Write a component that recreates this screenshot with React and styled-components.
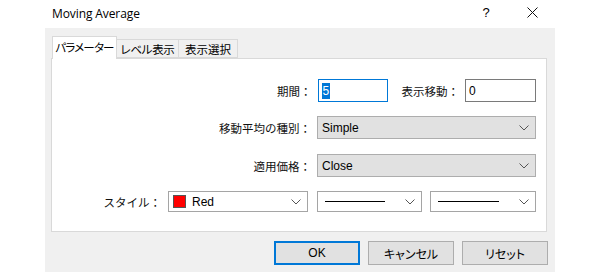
import React from "react";
import styled, { createGlobalStyle } from "styled-components";

const Global = createGlobalStyle`
  html, body { margin: 0; padding: 0; background: #fff; }
  body {
    font-family: "Liberation Sans", "Noto Sans CJK JP", sans-serif;
    font-size: 12px;
    color: #000;
  }
`;

const Page = styled.div`
  width: 600px;
  height: 272px;
  background: #fff;
  overflow: hidden;
`;

const Dialog = styled.div`
  width: 510px;
  margin-left: 45px;
  display: flex;
  flex-direction: column;
`;

const TitleBar = styled.div`
  height: 28px;
  display: flex;
  align-items: center;
  padding-left: 7px;
  background: #fff;
`;

const Title = styled.div`
  flex: 1;
  font-family: "Open Sans", "Liberation Sans", sans-serif;
  font-size: 12px;
  margin-top: -2px;
  letter-spacing: -0.1px;
`;

const TitleButton = styled.div`
  width: ${(p) => p.$w}px;
  display: flex;
  justify-content: center;
  align-items: center;
  font-size: 13px;
  margin-top: -3px;
`;

const Body = styled.div`
  height: 244px;
  background: #f0f0f0;
  padding: 8px 8px 0 6px;
  box-sizing: border-box;
  display: flex;
  flex-direction: column;
`;

const TabStrip = styled.div`
  height: 22px;
  display: flex;
  align-items: flex-end;
  padding-left: 1px;
  position: relative;
  z-index: 1;
`;

const Tab = styled.div`
  box-sizing: border-box;
  width: ${(p) => p.$w}px;
  height: ${(p) => (p.$active ? 23 : 19)}px;
  margin-bottom: ${(p) => (p.$active ? -1 : 0)}px;
  margin-left: ${(p) => (p.$first ? 0 : -1)}px;
  background: ${(p) => (p.$active ? "#fff" : "#f0f0f0")};
  border: 1px solid #d9d9d9;
  border-bottom: ${(p) => (p.$active ? "none" : "1px solid #d9d9d9")};
  display: flex;
  align-items: center;
  justify-content: center;
  font-family: "Noto Sans CJK JP", sans-serif;
  font-feature-settings: "palt";
  font-size: 11.5px;
  letter-spacing: ${(p) => p.$ls || 0}px;
  padding-bottom: ${(p) => (p.$active ? 2 : 0)}px;
  white-space: nowrap;
`;

const Panel = styled.div`
  box-sizing: border-box;
  width: 496px;
  height: 174px;
  background: #fff;
  border: 1px solid #d9d9d9;
  padding: 20px 10px 0 0;
  display: flex;
  flex-direction: column;
`;

const Row = styled.div`
  display: flex;
  justify-content: flex-end;
  align-items: center;
  height: ${(p) => p.$h}px;
  margin-top: ${(p) => p.$mt || 0}px;
`;

const Label = styled.div`
  font-family: "Noto Sans CJK JP", sans-serif;
  font-size: 11.5px;
  color: #111;
  white-space: nowrap;
  margin-left: ${(p) => p.$ml || 0}px;
  margin-right: ${(p) => p.$mr || 6}px;
`;

const TextBox = styled.div`
  box-sizing: border-box;
  width: ${(p) => p.$w}px;
  height: 23px;
  border: 1px solid ${(p) => (p.$focus ? "#0078d7" : "#7a7a7a")};
  background: #fff;
  display: flex;
  align-items: center;
  padding-left: 3px;
  font-size: 12px;
`;

const Selected = styled.span`
  background: #0078d7;
  color: #fff;
  padding: 1px 1px;
  line-height: 14px;
`;

const Select = styled.div`
  box-sizing: border-box;
  width: ${(p) => p.$w}px;
  height: ${(p) => p.$h || 23}px;
  margin-left: ${(p) => p.$ml || 0}px;
  border: 1px solid ${(p) => (p.$white ? "#a5a5a5" : "#adadad")};
  background: ${(p) => (p.$white ? "#fff" : "#e1e1e1")};
  display: flex;
  align-items: center;
  padding: 0 6px 0 4px;
  font-size: 12px;
  gap: 6px;
`;

const SelectText = styled.div`
  flex: 1;
  display: flex;
  align-items: center;
`;

const Swatch = styled.div`
  width: 13px;
  height: 13px;
  background: #ff0000;
  border: 1px solid #555;
  box-sizing: border-box;
  margin-right: 6px;
`;

const LineSample = styled.div`
  flex: 1;
  height: 1px;
  background: #000;
  margin: 0 14px 0 3px;
`;

const ButtonRow = styled.div`
  display: flex;
  justify-content: flex-end;
  margin-top: 9px;
  margin-right: -1px;
  gap: 8px;
`;

const Button = styled.div`
  box-sizing: border-box;
  width: 86px;
  height: 24px;
  background: #e1e1e1;
  border: ${(p) => (p.$default ? "2px solid #0078d7" : "1px solid #adadad")};
  display: flex;
  align-items: center;
  justify-content: center;
  font-family: "Liberation Sans", "Noto Sans CJK JP", sans-serif;
  font-feature-settings: "palt";
  font-size: 12px;
`;

const Chevron = () => (
  <svg width="10" height="6" viewBox="0 0 10 6">
    <polyline points="0.5,0.5 5,5 9.5,0.5" fill="none" stroke="#555" strokeWidth="1" />
  </svg>
);

const CloseIcon = () => (
  <svg width="11" height="11" viewBox="0 0 11 11">
    <path d="M0.5 0.5 L10.5 10.5 M10.5 0.5 L0.5 10.5" stroke="#111" strokeWidth="1" />
  </svg>
);

export default function App() {
  return (
    <Page>
      <Global />
      <Dialog>
        <TitleBar>
          <Title>Moving Average</Title>
          <TitleButton $w={46}>?</TitleButton>
          <TitleButton $w={46}>
            <CloseIcon />
          </TitleButton>
        </TitleBar>
        <Body>
          <TabStrip>
            <Tab $active $first $w={65} $ls={-0.8}>パラメーター</Tab>
            <Tab $w={63} $ls={-0.3}>レベル表示</Tab>
            <Tab $w={60}>表示選択</Tab>
          </TabStrip>
          <Panel>
            <Row $h={23}>
              <Label>期間：</Label>
              <TextBox $w={70} $focus>
                <Selected>5</Selected>
              </TextBox>
              <Label $ml={14}>表示移動：</Label>
              <TextBox $w={71}>0</TextBox>
            </Row>
            <Row $h={23} $mt={14}>
              <Label>移動平均の種別：</Label>
              <Select $w={219}>
                <SelectText>Simple</SelectText>
                <Chevron />
              </Select>
            </Row>
            <Row $h={23} $mt={15}>
              <Label>適用価格：</Label>
              <Select $w={219}>
                <SelectText>Close</SelectText>
                <Chevron />
              </Select>
            </Row>
            <Row $h={21} $mt={14}>
              <Label $mr={7}>スタイル：</Label>
              <Select $w={140} $h={21} $white>
                <SelectText>
                  <Swatch />
                  Red
                </SelectText>
                <Chevron />
              </Select>
              <Select $w={105} $h={21} $ml={9} $white>
                <LineSample />
                <Chevron />
              </Select>
              <Select $w={106} $h={21} $ml={8} $white>
                <LineSample />
                <Chevron />
              </Select>
            </Row>
          </Panel>
          <ButtonRow>
            <Button $default>OK</Button>
            <Button>キャンセル</Button>
            <Button>リセット</Button>
          </ButtonRow>
        </Body>
      </Dialog>
    </Page>
  );
}
